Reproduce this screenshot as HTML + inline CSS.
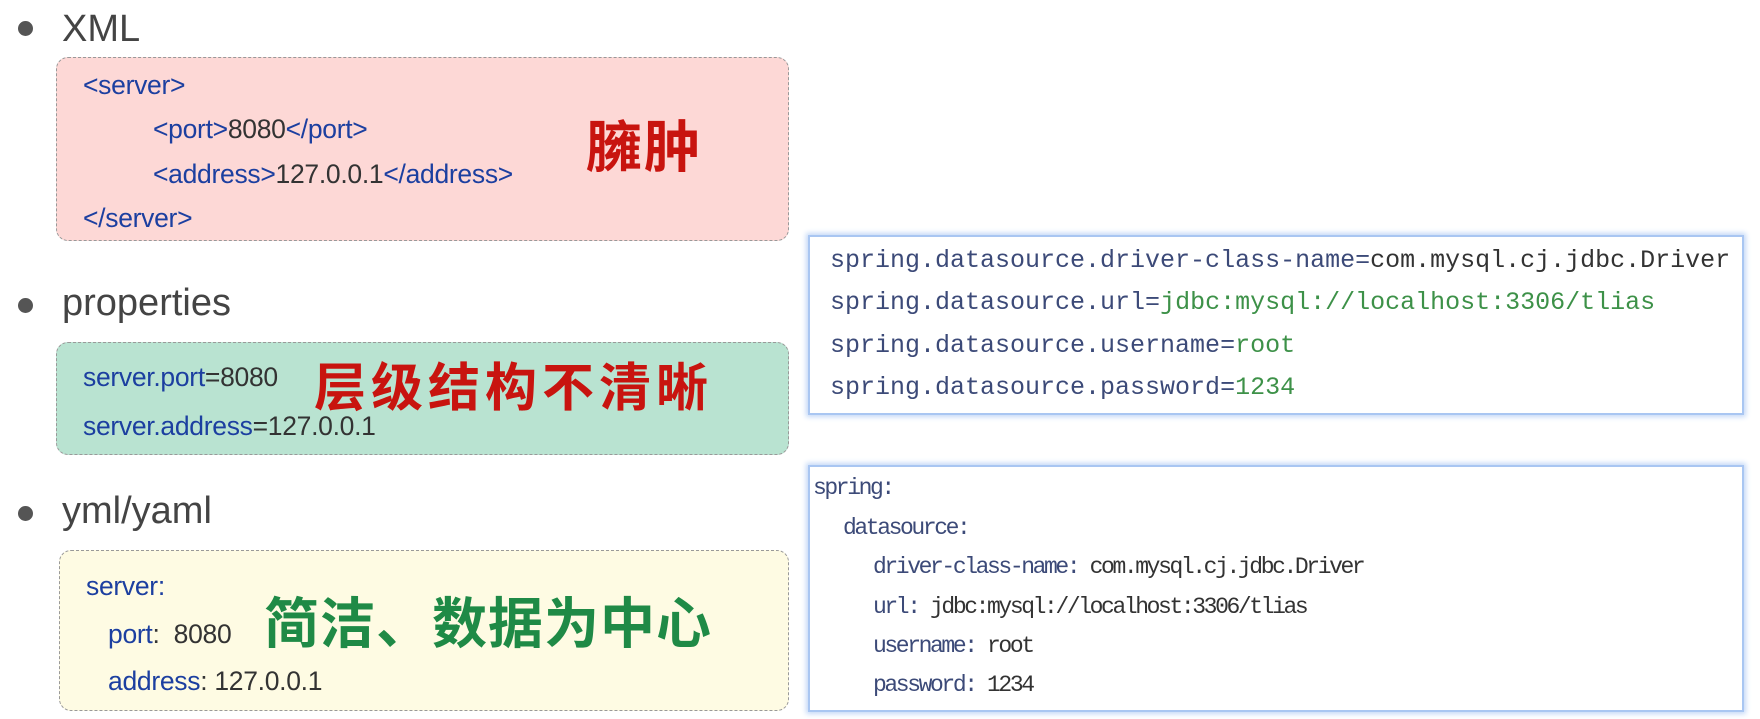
<!DOCTYPE html>
<html><head><meta charset="utf-8"><style>
body{margin:0;width:1760px;height:719px;background:#fff;position:relative;overflow:hidden;font-family:"Liberation Sans","Noto Sans CJK SC",sans-serif}
.a{position:absolute;white-space:nowrap}
.dot{position:absolute;width:15px;height:15px;border-radius:50%;background:#555}
.lbl{font-size:38px;color:#444;line-height:1}
.box{position:absolute;border:1px dashed #999;border-radius:12px}
.k{color:#1c3fa0}.v{color:#333}
.t{font-size:26.5px;line-height:1;letter-spacing:-0.3px}
.cn{font-family:"WenQuanYi Zen Hei","Noto Sans CJK SC",sans-serif;font-weight:bold;line-height:1}
.cb{position:absolute;background:#fff;border:2px solid #a9c6f2;box-shadow:0 0 5px 2px #c4d8f7}
.m{font-family:"Liberation Mono",monospace;font-size:25px;line-height:1;color:#3c4a78}
.y{font-size:23px;letter-spacing:-2.4px}
.g{color:#3d9148}.d{color:#333}
</style></head><body>
<div class="dot" style="left:18px;top:21px"></div><div class="a lbl" style="left:62px;top:10px">XML</div>
<div class="box" style="left:56px;top:57px;width:731px;height:182px;background:#fdd8d6"></div>
<div class="a t k" style="left:83px;top:72px">&lt;server&gt;</div>
<div class="a t" style="left:153px;top:116px"><span class="k">&lt;port&gt;</span><span class="v">8080</span><span class="k">&lt;/port&gt;</span></div>
<div class="a t" style="left:153px;top:161px"><span class="k">&lt;address&gt;</span><span class="v">127.0.0.1</span><span class="k">&lt;/address&gt;</span></div>
<div class="a t k" style="left:83px;top:205px">&lt;/server&gt;</div>
<div class="a cn" style="left:586px;top:116px;font-size:56px;color:#c8140f;letter-spacing:2px">臃肿</div>

<div class="dot" style="left:18px;top:298px"></div><div class="a lbl" style="left:62px;top:284px">properties</div>
<div class="box" style="left:56px;top:342px;width:731px;height:111px;background:#b9e3d1"></div>
<div class="a t" style="left:83px;top:364px"><span class="k">server.port</span><span class="v">=8080</span></div>
<div class="a t" style="left:83px;top:413px"><span class="k">server.address</span><span class="v">=127.0.0.1</span></div>
<div class="a cn" style="left:314px;top:358px;font-size:52px;color:#c8140f;letter-spacing:5px">层级结构不清晰</div>

<div class="dot" style="left:18px;top:506px"></div><div class="a lbl" style="left:62px;top:492px">yml/yaml</div>
<div class="box" style="left:59px;top:550px;width:728px;height:159px;background:#fefbe3"></div>
<div class="a t k" style="left:86px;top:573px">server:</div>
<div class="a t" style="left:108px;top:621px"><span class="k">port</span><span class="v">:&nbsp; 8080</span></div>
<div class="a t" style="left:108px;top:668px"><span class="k">address</span><span class="v">: 127.0.0.1</span></div>
<div class="a cn" style="left:264px;top:592px;font-size:55px;color:#1f8a46;letter-spacing:1px">简洁、数据为中心</div>

<div class="cb" style="left:808px;top:235px;width:932px;height:176px"></div>
<div class="a m" style="left:830px;top:248px">spring.datasource.driver-class-name=<span class="d">com.mysql.cj.jdbc.Driver</span></div>
<div class="a m" style="left:830px;top:290px">spring.datasource.url=<span class="g">jdbc:mysql://localhost:3306/tlias</span></div>
<div class="a m" style="left:830px;top:333px">spring.datasource.username=<span class="g">root</span></div>
<div class="a m" style="left:830px;top:375px">spring.datasource.password=<span class="g">1234</span></div>

<div class="cb" style="left:808px;top:465px;width:932px;height:243px"></div>
<div class="a m y" style="left:813px;top:477px">spring:</div>
<div class="a m y" style="left:843px;top:517px">datasource:</div>
<div class="a m y" style="left:873px;top:556px">driver-class-name: <span class="d">com.mysql.cj.jdbc.Driver</span></div>
<div class="a m y" style="left:873px;top:596px">url: <span class="d">jdbc:mysql://localhost:3306/tlias</span></div>
<div class="a m y" style="left:873px;top:635px">username: <span class="d">root</span></div>
<div class="a m y" style="left:873px;top:674px">password: <span class="d">1234</span></div>
</body></html>
